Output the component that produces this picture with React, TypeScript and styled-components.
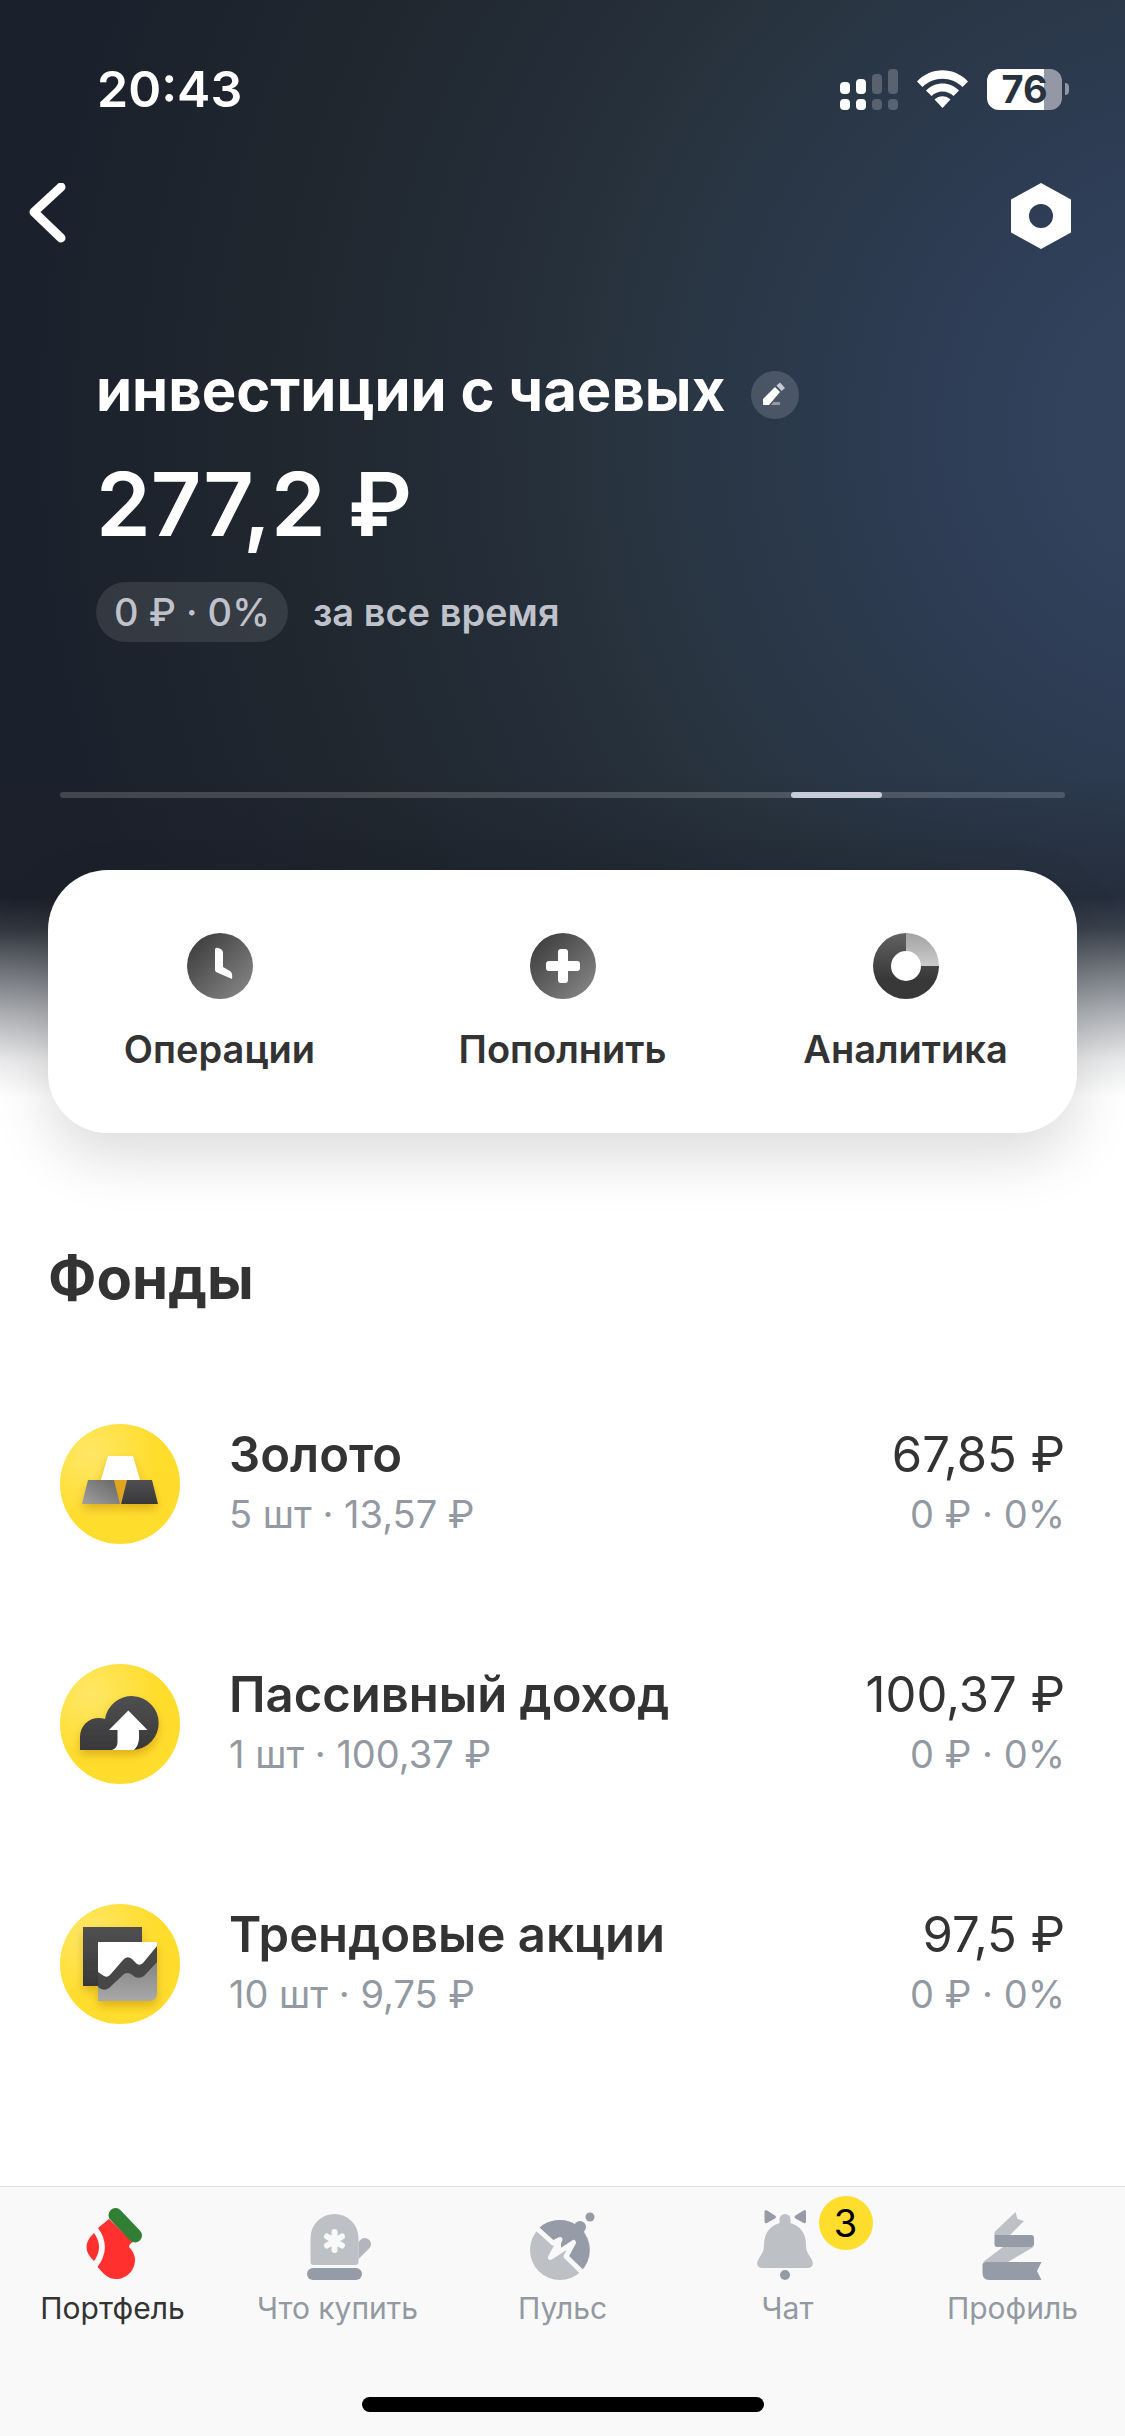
import * as React from 'react'
import styled, { createGlobalStyle } from 'styled-components'

const GlobalStyle = createGlobalStyle`
  * {
    box-sizing: border-box;
  }

  body {
    margin: 0;
    background: #fff;
    color: #333;
    font-family: Inter, "Liberation Sans", sans-serif;
  }

  button {
    padding: 0;
    border: 0;
    background: none;
    color: inherit;
    font: inherit;
    cursor: pointer;
  }

  a {
    color: inherit;
    text-decoration: none;
  }

  svg {
    display: block;
  }
`

const Page = styled.div`
  display: flex;
  flex-direction: column;
  min-height: 100vh;
`

const Hero = styled.header`
  color: #fff;
  background:
    linear-gradient(
      to bottom,
      rgba(255, 255, 255, 0) calc(100% - 236px),
      rgba(255, 255, 255, 0.1) calc(100% - 204px),
      rgba(255, 255, 255, 0.35) calc(100% - 166px),
      rgba(255, 255, 255, 0.64) calc(100% - 120px),
      rgba(255, 255, 255, 0.9) calc(100% - 73px),
      #fff calc(100% - 36px)
    ),
    linear-gradient(to bottom, rgba(26, 29, 38, 0) calc(100% - 360px), rgba(26, 29, 38, 0.4) calc(100% - 220px)),
    radial-gradient(circle at 108% 38%, #33445f 0%, #31415b 12%, #2d3b52 24%, #28343f 42%, #242d38 52%, #20272f 66%, #1b212c 85%);
`

const StatusBar = styled.div`
  display: flex;
  align-items: center;
  justify-content: space-between;
  padding: 59px 56px 0 97px;
`

const Time = styled.time`
  font-size: 50px;
  font-weight: 600;
  line-height: 60px;
`

const StatusIcons = styled.div`
  display: flex;
  align-items: center;
  gap: 19px;
`

const Battery = styled.div`
  display: flex;
  align-items: center;
  gap: 3px;

  &::after {
    content: '';
    width: 4px;
    height: 12px;
    border-radius: 0 6px 6px 0;
    background: #8f95a2;
  }
`

const BatteryLevel = styled.span`
  width: 75px;
  border-radius: 12px;
  background: linear-gradient(to right, #fff 76%, #9398a4 76%);
  color: #28323f;
  font-size: 38px;
  font-weight: 700;
  line-height: 41px;
  text-align: center;
`

const Toolbar = styled.div`
  display: flex;
  justify-content: space-between;
  margin-top: 64px;
  padding: 0 54px 0 24px;
`

const Summary = styled.div`
  padding: 112px 96px 0;
`

const AccountName = styled.div`
  display: flex;
  align-items: flex-end;
  gap: 26px;
`

const Title = styled.h1`
  margin: 0;
  font-size: 58px;
  font-weight: 700;
  line-height: 58px;
`

const EditButton = styled.button`
  border-radius: 50%;
  background: rgba(255, 255, 255, 0.15);
`

const Balance = styled.div`
  margin-top: 33px;
  font-size: 88px;
  font-weight: 600;
  line-height: 104px;
`

const Yield = styled.div`
  display: flex;
  align-items: center;
  gap: 25px;
  margin-top: 26px;
  color: #bfc2cb;
  font-size: 38px;
  font-weight: 500;
  line-height: 60px;
`

const YieldPill = styled.span`
  padding: 0 18px;
  border-radius: 30px;
  background: rgba(255, 255, 255, 0.1);
`

const Period = styled.span`
  font-weight: 600;
`

const Track = styled.div`
  display: grid;
  grid-template-columns: 731fr 91fr 183fr;
  height: 6px;
  margin: 150px 60px 0;
  border-radius: 3px;
  background: rgba(255, 255, 255, 0.17);
`

const Thumb = styled.div`
  grid-column: 2;
  border-radius: 3px;
  background: #c8ccd6;
`

const Actions = styled.div`
  display: grid;
  grid-template-columns: repeat(3, 1fr);
  margin: 72px 48px 0;
  padding: 63px 0 60px;
  border-radius: 60px;
  background: #fff;
  color: #333;
  box-shadow: 0 24px 60px rgba(0, 0, 0, 0.14);
`

const Action = styled.button`
  display: flex;
  flex-direction: column;
  align-items: center;
  gap: 26px;
  font-size: 38px;
  font-weight: 600;
  line-height: 48px;
`

const SectionTitle = styled.h2`
  margin: 109px 48px 50px;
  font-size: 58px;
  font-weight: 700;
  line-height: 72px;
`

const FundList = styled.ul`
  margin: 0;
  padding: 0;
  list-style: none;
`

const Fund = styled.a`
  display: flex;
  align-items: center;
  height: 240px;
  padding: 0 60px;
`

const FundText = styled.div`
  display: flex;
  flex: 1;
  flex-direction: column;
  margin-left: 49px;
`

const FundValue = styled.div`
  display: flex;
  flex-direction: column;
  align-items: flex-end;
`

const Primary = styled.span<{ $bold?: boolean }>`
  font-size: 49px;
  font-weight: ${p => (p.$bold ? 600 : 400)};
  line-height: 60px;
`

const Secondary = styled.span`
  color: #9299a2;
  font-size: 38px;
  line-height: 58px;
`

const TabBar = styled.nav`
  margin-top: auto;
  padding-bottom: 24px;
  border-top: 1px solid #dcdddf;
  background: #f9f9f9;
`

const Tabs = styled.div`
  display: grid;
  grid-template-columns: repeat(5, 1fr);
  padding-top: 19px;
`

const Tab = styled.a<{ $active?: boolean }>`
  display: flex;
  flex-direction: column;
  align-items: center;
  gap: 8px;
  color: ${p => (p.$active ? '#333' : '#9299a2')};
  font-size: 30px;
  line-height: 36px;
`

const TabIcon = styled.span`
  position: relative;
`

const Badge = styled.span`
  position: absolute;
  top: -10px;
  left: 67px;
  width: 54px;
  border-radius: 27px;
  background: #ffdd2d;
  color: #000;
  font-size: 38px;
  line-height: 54px;
  text-align: center;
`

const HomeIndicator = styled.div`
  width: 402px;
  height: 15px;
  margin: 71px auto 0;
  border-radius: 8px;
  background: #000;
`

const SignalIcon = () => (
  <svg width="58" height="41" fill="#fff">
    <rect x="0" y="13" width="10" height="12" rx="4" />
    <rect x="16" y="10" width="10" height="15" rx="4" />
    <rect x="32" y="5" width="10" height="20" rx="4" opacity=".22" />
    <rect x="48" y="0" width="10" height="25" rx="4" opacity=".22" />
    <rect x="0" y="30" width="10" height="11" rx="4" />
    <rect x="16" y="30" width="10" height="11" rx="4" />
    <rect x="32" y="30" width="10" height="11" rx="4" opacity=".22" />
    <rect x="48" y="30" width="10" height="11" rx="4" opacity=".22" />
  </svg>
)

const WifiIcon = () => (
  <svg width="51" height="38" fill="#fff">
    <path d="M0 11.5C14-3.5 37-3.5 51 11.5L45.5 17C34.5 6 16.5 6 5.5 17Z" />
    <path d="M9 20.5C18 11 33 11 42 20.5L36.5 26C30.5 20 20.5 20 14.5 26Z" />
    <path d="M17.5 29.5C22 25 29 25 33.5 29.5L25.5 38Z" />
  </svg>
)

const BackIcon = () => (
  <svg width="48" height="66" fill="none" stroke="#fff" strokeWidth="9" strokeLinecap="round" strokeLinejoin="round">
    <path d="M37 4L10 29L37 55" />
  </svg>
)

const SettingsIcon = () => (
  <svg width="60" height="66" fill="#fff" fillRule="evenodd">
    <path d="M30 0L60 16.5V49.5L30 66L0 49.5V16.5ZM30 21A12 12 0 1 0 30 45A12 12 0 1 0 30 21Z" />
  </svg>
)

const PencilIcon = () => (
  <svg width="48" height="48">
    <path d="M12 34V28L24 16L29 21L18 34Z" fill="#fff" />
    <path d="M25.5 14.5L29 11.5L34 17L30.5 20Z" fill="#c5cad3" />
    <path d="M20 34L22.500 31H29V34H20Z" fill="#9299a5" />
  </svg>
)

const ClockIcon = () => (
  <svg width="66" height="66">
    <defs>
      <linearGradient id="disc" x1="0" y1="0" x2="1" y2="1">
        <stop offset=".1" stopColor="#3e3e3f" />
        <stop offset=".9" stopColor="#838384" />
      </linearGradient>
    </defs>
    <circle cx="33" cy="33" r="33" fill="url(#disc)" />
    <path d="M28 17Q28 14 31 15Q36 16 36 20V34L43 38Q46 40 45 46L29 39Q28 38 28 37Z" fill="#fff" />
  </svg>
)

const PlusIcon = () => (
  <svg width="66" height="66" fill="#fff">
    <circle cx="33" cy="33" r="33" fill="url(#disc)" />
    <rect x="28" y="16" width="10" height="34" rx="3" />
    <rect x="16" y="28" width="34" height="10" rx="3" />
  </svg>
)

const DonutIcon = () => (
  <svg width="66" height="66">
    <defs>
      <linearGradient id="ring" x1="0" y1="0" x2="0" y2="1">
        <stop offset="0" stopColor="#626262" />
        <stop offset=".7" stopColor="#383839" />
      </linearGradient>
      <linearGradient id="slice" x1="0" y1="0" x2="0" y2="1">
        <stop offset="0" stopColor="#a2a2a2" />
        <stop offset="1" stopColor="#cbcbcb" />
      </linearGradient>
    </defs>
    <path d="M33 0A33 33 0 1 0 66 33H48A15 15 0 1 1 33 18Z" fill="url(#ring)" />
    <path d="M33 0A33 33 0 0 1 66 33H48A15 15 0 0 0 33 18Z" fill="url(#slice)" />
  </svg>
)

const Coin = ({ children }: { children: React.ReactNode }) => (
  <svg width="120" height="120">
    <defs>
      <radialGradient id="coin" cx=".25" cy=".25" r=".55">
        <stop offset="0" stopColor="#ffe766" />
        <stop offset="1" stopColor="#ffdd2d" />
      </radialGradient>
      <linearGradient id="silver" x1="0" y1="1" x2="1" y2="0">
        <stop offset="0" stopColor="#a0a0a0" />
        <stop offset="1" stopColor="#656565" />
      </linearGradient>
      <linearGradient id="steel" x1="0" y1="0" x2="0" y2="1">
        <stop offset="0" stopColor="#828283" />
        <stop offset="1" stopColor="#a9a9aa" />
      </linearGradient>
      <linearGradient id="coal" x1="0" y1="1" x2="0" y2="0">
        <stop offset="0" stopColor="#383839" />
        <stop offset="1" stopColor="#505051" />
      </linearGradient>
      <filter id="shade" x="-30%" y="-30%" width="160%" height="170%">
        <feDropShadow dx="0" dy="5" stdDeviation="5" floodColor="#b87800" floodOpacity=".45" />
      </filter>
    </defs>
    <circle cx="60" cy="60" r="60" fill="url(#coin)" />
    <g filter="url(#shade)">{children}</g>
  </svg>
)

const GoldIcon = () => (
  <Coin>
    <path d="M54 56H67L60 80Z" fill="#e0a51d" />
    <path d="M48 32H73L80 56H41Z" fill="#fff" />
    <path d="M28 56H54L60 80H22Z" fill="url(#silver)" />
    <path d="M67 56H92L98 80H61Z" fill="url(#coal)" />
  </Coin>
)

const CloudIcon = () => (
  <Coin>
    <path d="M20 86V73C20 59 33 51 45 55A27 27 0 1 1 74 86Z" fill="url(#coal)" />
    <path d="M68.3 46.5L87.5 66H79V74Q79 81 74 86H52Q57.5 84 57.5 78V66H49Z" fill="#fff" />
  </Coin>
)

const TrendIcon = () => (
  <Coin>
    <path d="M23 23H82V82H23Z" fill="url(#coal)" />
    <path d="M38 38H97V62L38 84Z" fill="#fff" />
    <path d="M38 80L66 66L97 56V89Q97 97 89 97H38Z" fill="url(#steel)" />
    <path d="M38 68L44 72Q47 74 50 71L63 56Q67 51 72 55L77 60Q80 62 83 59L97 42V58L84 72Q80 75 75 73L71 70Q67 68 64 70L49 84Q44 88 38 83Z" fill="#464647" />
  </Coin>
)

const StockingIcon = () => (
  <svg width="72" height="76">
    <path d="M32 13L21 22Q35 41 20.5 61L27 68C40 80 58 69 58 54Q58 47 52 41Q52 38 56 36Z" fill="#ff302e" />
    <path d="M17 27Q27 41 17 55Q2 41 17 27Z" fill="#ff302e" />
    <path d="M38.5 9L58 29.5" stroke="#317f34" strokeWidth="14" strokeLinecap="round" />
  </svg>
)

const MittenIcon = () => (
  <svg width="72" height="76">
    <path d="M8.5 32A24 24 0 0 1 56.5 32V56Q56.5 59 53.5 59H11.5Q8.5 59 8.5 56Z" fill="#bdc1c6" />
    <path d="M56.5 36L60 32.5C66 30 72 37 67.5 42L56.5 53Z" fill="#b2b6bc" />
    <rect x="5" y="62" width="55" height="12" rx="6" fill="#959ca8" />
    <path d="M32.5 26V44M25 30.5L40 39.5M40 30.5L25 39.5" stroke="#f9f9f9" strokeWidth="6" strokeLinecap="round" />
  </svg>
)

const PulseIcon = () => (
  <svg width="72" height="76">
    <circle cx="33" cy="44" r="30" fill="#bdc1c5" />
    <path d="M11 23A30 30 0 0 1 54 65L39 51.5L47.5 36L24 51.5L34 33L26 37Z" fill="#959ca8" />
    <circle cx="53" cy="21" r="6" fill="#959ca8" />
    <circle cx="63" cy="11" r="4.5" fill="#959ca8" />
    <path d="M34 33L28 40L24 51.5L34 42Z" fill="#f9f9f9" />
    <path d="M10 22.5L26 37L33 33.5L23.5 51.5L46.5 36.5L39 50.5L55 66" fill="none" stroke="#f9f9f9" strokeWidth="5" strokeLinejoin="round" />
  </svg>
)

const BellIcon = () => (
  <svg width="72" height="76">
    <path d="M27.5 17V13.5A5.5 5.5 0 0 1 38.5 13.5V17Q54 22 54 39Q54 45 57 49L60 54Q63 62 55 62H11Q3 62 6 54L9 49Q12 45 12 39Q12 22 27.5 17Z" fill="#bdc1c6" />
    <path d="M12.5 6Q12.5 3 15 4.5L23 9.5Q25 11 23 12.5L15 17Q12.5 18 12.5 15ZM54 6Q54 3 51.5 4.5L43.5 9.5Q41.5 11 43.5 12.5L51.5 17Q54 18 54 15Z" fill="#959ca8" />
    <circle cx="33" cy="69" r="5" fill="#959ca8" />
  </svg>
)

const TreeIcon = () => (
  <svg width="72" height="76">
    <path d="M38.5 6L40.5 13L47 15L33 29H17.5V26ZM26 41H56.5L31 56H6Z" fill="#bdc1c6" />
    <path d="M17.5 29H54Q57 29 57 32V38Q57 41 54 41H20Q17.5 41 17.5 38ZM9 56H64.5L60 65L64.5 74H12Q5.5 74 5.5 67V59Q5.5 56 9 56Z" fill="#959ca8" />
  </svg>
)

const actions = [
  { label: 'Операции', icon: <ClockIcon /> },
  { label: 'Пополнить', icon: <PlusIcon /> },
  { label: 'Аналитика', icon: <DonutIcon /> },
]

const funds = [
  { name: 'Золото', amount: '5 шт · 13,57 ₽', value: '67,85 ₽', icon: <GoldIcon /> },
  { name: 'Пассивный доход', amount: '1 шт · 100,37 ₽', value: '100,37 ₽', icon: <CloudIcon /> },
  { name: 'Трендовые акции', amount: '10 шт · 9,75 ₽', value: '97,5 ₽', icon: <TrendIcon /> },
]

const tabs = [
  { label: 'Портфель', icon: <StockingIcon />, active: true },
  { label: 'Что купить', icon: <MittenIcon /> },
  { label: 'Пульс', icon: <PulseIcon /> },
  { label: 'Чат', icon: <BellIcon />, badge: 3 },
  { label: 'Профиль', icon: <TreeIcon /> },
]

const App = () => (
  <Page>
    <GlobalStyle />
    <Hero>
      <StatusBar>
        <Time>20:43</Time>
        <StatusIcons>
          <SignalIcon />
          <WifiIcon />
          <Battery>
            <BatteryLevel>76</BatteryLevel>
          </Battery>
        </StatusIcons>
      </StatusBar>
      <Toolbar>
        <button aria-label="Назад">
          <BackIcon />
        </button>
        <button aria-label="Настройки">
          <SettingsIcon />
        </button>
      </Toolbar>
      <Summary>
        <AccountName>
          <Title>инвестиции с чаевых</Title>
          <EditButton aria-label="Переименовать">
            <PencilIcon />
          </EditButton>
        </AccountName>
        <Balance>277,2 ₽</Balance>
        <Yield>
          <YieldPill>0 ₽ · 0%</YieldPill>
          <Period>за все время</Period>
        </Yield>
      </Summary>
      <Track>
        <Thumb />
      </Track>
      <Actions>
        {actions.map(({ label, icon }) => (
          <Action key={label}>
            {icon}
            {label}
          </Action>
        ))}
      </Actions>
    </Hero>
    <main>
      <SectionTitle>Фонды</SectionTitle>
      <FundList>
        {funds.map(({ name, amount, value, icon }) => (
          <li key={name}>
            <Fund href="#">
              {icon}
              <FundText>
                <Primary $bold>{name}</Primary>
                <Secondary>{amount}</Secondary>
              </FundText>
              <FundValue>
                <Primary>{value}</Primary>
                <Secondary>0 ₽ · 0%</Secondary>
              </FundValue>
            </Fund>
          </li>
        ))}
      </FundList>
    </main>
    <TabBar>
      <Tabs>
        {tabs.map(({ label, icon, active, badge }) => (
          <Tab key={label} href="#" $active={active}>
            <TabIcon>
              {icon}
              {badge && <Badge>{badge}</Badge>}
            </TabIcon>
            {label}
          </Tab>
        ))}
      </Tabs>
      <HomeIndicator />
    </TabBar>
  </Page>
)

export default App
